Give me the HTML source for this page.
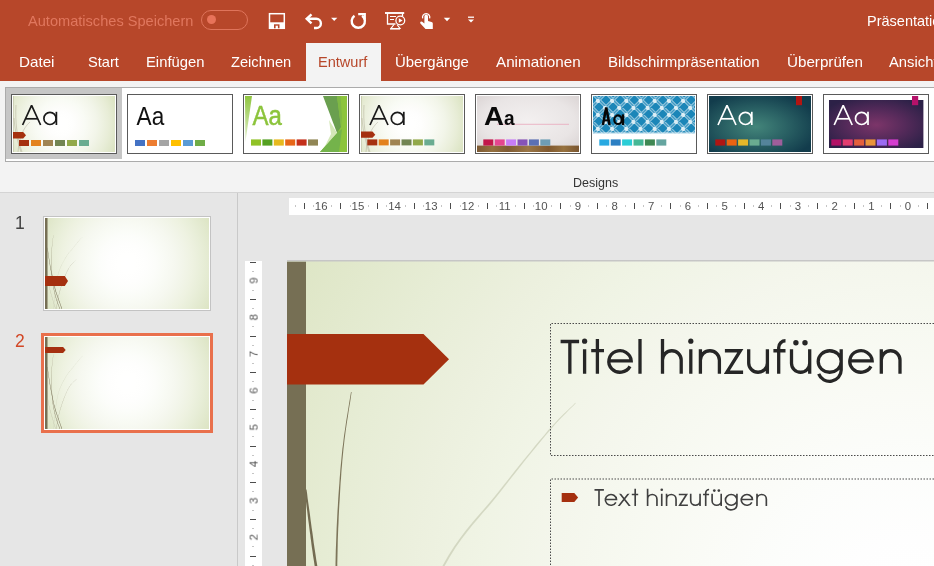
<!DOCTYPE html>
<html lang="de">
<head>
<meta charset="utf-8">
<title>PowerPoint</title>
<style>
*{margin:0;padding:0;box-sizing:border-box}
html,body{width:934px;height:566px;overflow:hidden;background:#e6e6e6;font-family:"Liberation Sans",sans-serif}
#app{position:relative;width:934px;height:566px;overflow:hidden;background:#e6e6e6}
.abs{position:absolute}
.t{position:absolute;white-space:nowrap;transform-origin:0 0;line-height:1;will-change:transform}
svg text{will-change:transform}
/* title + tab strip */
#top{left:0;top:0;width:934px;height:81px;background:#b7472a}
#tabactive{left:306px;top:43px;width:75px;height:38px;background:#f3f3f3}
.tab{font-size:14.5px;color:#fff;top:55px}
/* ribbon */
#ribbon{left:0;top:81px;width:934px;height:111px;background:#f3f3f3}
#ribline{left:0;top:192px;width:934px;height:1px;background:#d4d4d4}
#gallery{left:5px;top:87px;width:960px;height:75px;background:#fff;border:1px solid #ababab}
#sel{left:6px;top:88px;width:116px;height:71px;background:#c6c6c6}
.th{position:absolute;top:94px;width:106px;height:60px;border:1px solid #5a5a5a;background:#fff;overflow:hidden}
.th svg{position:absolute;left:1px;top:1px;width:102px;height:56px;display:block}
/* panels */
#vline{left:237px;top:193px;width:1px;height:373px;background:#c9c9c9}
#hruler{left:289px;top:198px;width:645px;height:17px;background:#fff}
#vruler{left:245px;top:261px;width:17px;height:305px;background:#fff}
</style>
</head>
<body>
<div id="app">

<!-- ===== title bar + tabs ===== -->
<div id="top" class="abs"></div>
<div id="tabactive" class="abs"></div>
<span class="t" id="autosave" style="left:28.400px;top:14px;font-size:14.5px;color:#e0775e;transform:scaleX(1.006)">Automatisches Speichern</span>
<div class="abs" id="toggle" style="left:201px;top:10px;width:47px;height:20px;border:1px solid #df745b;border-radius:10px"></div>
<div class="abs" id="knob" style="left:206.500px;top:15.300px;width:9px;height:9px;border-radius:4.500px;background:#e8735a"></div>
<span class="t" id="ptitle" style="left:867.300px;top:14px;font-size:14.5px;color:#fff">Präsentation1</span>
<svg class="abs" id="qat" style="left:260px;top:8px" width="230" height="26" viewBox="260 8 230 26" fill="none">
  <!-- save -->
  <rect x="269.5" y="13.700" width="14.800" height="14.600" stroke="#fff" stroke-width="1.5"/>
  <rect x="269.5" y="22.300" width="14.800" height="6" fill="#fff"/>
  <rect x="274" y="24.300" width="5.500" height="4" fill="#b7472a"/>
  <rect x="275.600" y="25.700" width="2.300" height="3.300" fill="#fff"/>
  <!-- undo -->
  <path d="M311.500 14.300l-4.800 4.500 4.800 4.500" stroke="#fff" stroke-width="2.400"/>
  <path d="M307 18.800h9.300a4.600 4.600 0 0 1 0 9.200h-2.300" stroke="#fff" stroke-width="2.400"/>
  <path d="M331.100 17.800h6.200l-3.100 3.300z" fill="#fff"/>
  <!-- redo (repeat) -->
  <path d="M354.500 15.800a6.600 6.600 0 1 0 7.600 0" stroke="#fff" stroke-width="2.400"/>
  <path d="M358.200 14.200h6.600v5.600" stroke="#fff" stroke-width="2.200"/>
  <!-- present -->
  <path d="M385 13h19.200" stroke="#fff" stroke-width="1.900"/>
  <path d="M387.5 13v11h8" stroke="#fff" stroke-width="1.3"/>
  <path d="M402.5 13v3" stroke="#fff" stroke-width="1.3"/>
  <path d="M390 16.5h6M390 19.5h4" stroke="#fff" stroke-width="1.2"/>
  <circle cx="400.3" cy="20.5" r="4.4" stroke="#fff" stroke-width="1.3"/>
  <path d="M398.8 18.2l3.8 2.3-3.8 2.3z" fill="#fff"/>
  <path d="M394 24.5l-3 4h9l-3-4" stroke="#fff" stroke-width="1.2"/>
  <path d="M390 29h10" stroke="#fff" stroke-width="1.2"/>
  <!-- touch -->
  <path d="M424.400 16.400a1.800 1.800 0 0 1 3.600 0v4.700l3.500.8a1.700 1.700 0 0 1 1.300 1.700v5.300h-7.300l-5.100-5.500a1.250 1.250 0 0 1 1.800-1.700l2.200 1.900z" fill="#fff"/>
  <path d="M422.700 18.400a3.650 3.650 0 1 1 6.900 0" stroke="#fff" stroke-width="1.300"/>
  <path d="M443.800 17.800h6.400l-3.200 3.400z" fill="#fff"/>
  <!-- customize -->
  <path d="M468 17.2h6" stroke="#fff" stroke-width="1.3"/>
  <path d="M468 19.6h6l-3 3z" fill="#fff"/>
</svg>
<span class="t tab" style="left:18.6px;transform:scaleX(1.048)">Datei</span>
<span class="t tab" style="left:88.4px;transform:scaleX(1.01)">Start</span>
<span class="t tab" style="left:145.7px;transform:scaleX(1.02)">Einfügen</span>
<span class="t tab" style="left:230.8px;transform:scaleX(1.01)">Zeichnen</span>
<span class="t tab" style="left:317.8px;color:#b7472a;transform:scaleX(1.004)">Entwurf</span>
<span class="t tab" style="left:394.7px;transform:scaleX(1.03)">Übergänge</span>
<span class="t tab" style="left:496.0px;transform:scaleX(1.05)">Animationen</span>
<span class="t tab" style="left:607.6px;transform:scaleX(1.034)">Bildschirmpräsentation</span>
<span class="t tab" style="left:786.6px;transform:scaleX(1.047)">Überprüfen</span>
<span class="t tab" style="left:889.1px;transform:scaleX(1.02)">Ansicht</span>

<!-- ===== ribbon ===== -->
<div id="ribbon" class="abs"></div>
<div id="ribline" class="abs"></div>
<div id="gallery" class="abs"></div>
<div id="sel" class="abs"></div>
<svg width="0" height="0" style="position:absolute"><defs><radialGradient id="wg" gradientUnits="userSpaceOnUse" cx="48" cy="28" r="60"><stop offset="0" stop-color="#ffffff"/><stop offset="0.1" stop-color="#fffffe"/><stop offset="0.2" stop-color="#fefefd"/><stop offset="0.3" stop-color="#fcfcf9"/><stop offset="0.4" stop-color="#f9fbf5"/><stop offset="0.5" stop-color="#f6f8ef"/><stop offset="0.6" stop-color="#f2f5e9"/><stop offset="0.7" stop-color="#edf1e0"/><stop offset="0.8" stop-color="#e8edd7"/><stop offset="0.9" stop-color="#e1e8cc"/><stop offset="1.0" stop-color="#dbe3c1"/></radialGradient></defs></svg>
<div class="th" style="left:11px"><svg viewBox="0 0 102 56"><rect width="102" height="56" fill="url(#wg)"/><g fill="none" stroke="#8d866f" stroke-opacity=".3" stroke-width="1"><path d="M3 9C2 25 4 42 9 56"/><path d="M1 22C2 36 5 47 8 56"/><path d="M17 26C10 32 6 42 5 56" stroke-opacity=".3"/></g><rect width="0.6" height="56" fill="#7a7359" fill-opacity=".35"/><path d="M0 36H10.2L13 39.3L10.2 42.6H0z" fill="#a5300f"/><rect x="6.00" y="44" width="10" height="6" fill="#a5300f"/><rect x="18.00" y="44" width="10" height="6" fill="#e3821e"/><rect x="30.00" y="44" width="10" height="6" fill="#a08452"/><rect x="42.00" y="44" width="10" height="6" fill="#728553"/><rect x="54.00" y="44" width="10" height="6" fill="#92a94a"/><rect x="66.00" y="44" width="10" height="6" fill="#6aac91"/><g fill="none" stroke="#1a1a1a" stroke-width="1.7" stroke-linejoin="miter" stroke-miterlimit="2"><path d="M9.6 29L18.6 9.399999999999999L27.6 29"/><path d="M12.6 22.8H24.6"/><circle cx="37.0" cy="22.4" r="6.1"/><path d="M43.4 15.8V29"/></g></svg></div>
<div class="th" style="left:127px"><svg viewBox="0 0 102 56"><rect width="102" height="56" fill="#fff"/><text x="7.6" y="29" font-family="Liberation Sans" font-size="25.4" fill="#111" textLength="27.6" lengthAdjust="spacingAndGlyphs">Aa</text><rect x="6.00" y="44" width="10" height="6" fill="#4472c4"/><rect x="18.00" y="44" width="10" height="6" fill="#ed7d31"/><rect x="30.00" y="44" width="10" height="6" fill="#a5a5a5"/><rect x="42.00" y="44" width="10" height="6" fill="#ffc000"/><rect x="54.00" y="44" width="10" height="6" fill="#5b9bd5"/><rect x="66.00" y="44" width="10" height="6" fill="#70ad47"/></svg></div>
<div class="th" style="left:243px"><svg viewBox="0 0 102 56"><rect width="102" height="56" fill="#fff"/><defs><linearGradient id="fg" x1="0" y1="0" x2="0" y2="1"><stop offset="0" stop-color="#8fc53f"/><stop offset="1" stop-color="#8fc53f" stop-opacity=".25"/></linearGradient></defs><path d="M0 0H7L0.4 46z" fill="url(#fg)"/><path d="M92 0H102V56H75L92 37z" fill="#8cc43c"/><path d="M78 0H92L96 31L92 37z" fill="#6a9f4f"/><path d="M92 0H95.5L97 22L96 31z" fill="#7fb845"/><path d="M84 24L92 37L79 52L86 38z" fill="#d4e8b8"/><path d="M92 37L97 33L94 56H75z" fill="#74b34b"/><text x="7.6" y="29" font-family="Liberation Sans" font-size="27" fill="#8cc43c" stroke="#8cc43c" stroke-width=".5" textLength="29.4" lengthAdjust="spacingAndGlyphs">Aa</text><rect x="6.00" y="43.4" width="10" height="6.2" fill="#90c226"/><rect x="17.40" y="43.4" width="10" height="6.2" fill="#54a021"/><rect x="28.80" y="43.4" width="10" height="6.2" fill="#e6b91e"/><rect x="40.20" y="43.4" width="10" height="6.2" fill="#e76618"/><rect x="51.60" y="43.4" width="10" height="6.2" fill="#c42f1a"/><rect x="63.00" y="43.4" width="10" height="6.2" fill="#918655"/></svg></div>
<div class="th" style="left:359px"><svg viewBox="0 0 102 56"><rect width="102" height="56" fill="url(#wg)"/><g fill="none" stroke="#8d866f" stroke-opacity=".3" stroke-width="1"><path d="M3 9C2 25 4 42 9 56"/><path d="M1 22C2 36 5 47 8 56"/><path d="M17 26C10 32 6 42 5 56" stroke-opacity=".3"/></g><rect width="0.6" height="56" fill="#7a7359" fill-opacity=".35"/><path d="M0 35.6H11.5L14.3 38.650000000000006L11.5 41.7H0z" fill="#a5300f"/><rect x="6.30" y="43.4" width="10" height="6" fill="#a5300f"/><rect x="17.70" y="43.4" width="10" height="6" fill="#e3821e"/><rect x="29.10" y="43.4" width="10" height="6" fill="#a08452"/><rect x="40.50" y="43.4" width="10" height="6" fill="#728553"/><rect x="51.90" y="43.4" width="10" height="6" fill="#92a94a"/><rect x="63.30" y="43.4" width="10" height="6" fill="#6aac91"/><g fill="none" stroke="#1a1a1a" stroke-width="1.7" stroke-linejoin="miter" stroke-miterlimit="2"><path d="M9.0 29L18.0 9.399999999999999L27.0 29"/><path d="M12.0 22.8H24.0"/><circle cx="36.4" cy="22.4" r="6.1"/><path d="M42.8 15.8V29"/></g></svg></div>
<div class="th" style="left:475px"><svg viewBox="0 0 102 56"><defs><radialGradient id="gg" cx="0.5" cy="0.45" r="0.75"><stop offset="0" stop-color="#f3f0f0"/><stop offset="0.6" stop-color="#e9e5e5"/><stop offset="1" stop-color="#d6cfcf"/></radialGradient><linearGradient id="wd" x1="0" y1="0" x2="1" y2="0"><stop offset="0" stop-color="#7d5a33"/><stop offset=".15" stop-color="#94703f"/><stop offset=".3" stop-color="#7f5b34"/><stop offset=".5" stop-color="#9a7646"/><stop offset=".7" stop-color="#80592f"/><stop offset=".85" stop-color="#97723f"/><stop offset="1" stop-color="#7a5630"/></linearGradient></defs><rect width="102" height="56" fill="url(#gg)"/><rect y="49.6" width="102" height="6.4" fill="url(#wd)"/><path d="M20 28.3H92" stroke="#e9a7bb" stroke-width=".8"/><text x="7" y="29" font-family="Liberation Sans" font-weight="bold" font-size="26" fill="#0a0a0a" textLength="20" lengthAdjust="spacingAndGlyphs">A</text><text x="27" y="29" font-family="Liberation Sans" font-weight="bold" font-size="21" fill="#0a0a0a" textLength="10.6" lengthAdjust="spacingAndGlyphs">a</text><rect x="6.30" y="43.4" width="10" height="6.2" fill="#c2174a"/><rect x="17.70" y="43.4" width="10" height="6.2" fill="#e5458f"/><rect x="29.10" y="43.4" width="10" height="6.2" fill="#c77cf7"/><rect x="40.50" y="43.4" width="10" height="6.2" fill="#8653b7"/><rect x="51.90" y="43.4" width="10" height="6.2" fill="#5b70b4"/><rect x="63.30" y="43.4" width="10" height="6.2" fill="#6e9db5"/></svg></div>
<div class="th" style="left:591px"><svg viewBox="0 0 102 56"><rect width="102" height="56" fill="#fff"/><clipPath id="c6"><rect width="102" height="37.4"/></clipPath><rect width="102" height="37.4" fill="#1b86b8"/><g clip-path="url(#c6)"><path d="M-127.80 -2L-85.80 40M-116.00 -2L-158.00 40M-113.60 -2L-71.60 40M-101.80 -2L-143.80 40M-99.40 -2L-57.40 40M-87.60 -2L-129.60 40M-85.20 -2L-43.20 40M-73.40 -2L-115.40 40M-71.00 -2L-29.00 40M-59.20 -2L-101.20 40M-56.80 -2L-14.80 40M-45.00 -2L-87.00 40M-42.60 -2L-0.60 40M-30.80 -2L-72.80 40M-28.40 -2L13.60 40M-16.60 -2L-58.60 40M-14.20 -2L27.80 40M-2.40 -2L-44.40 40M0.00 -2L42.00 40M11.80 -2L-30.20 40M14.20 -2L56.20 40M26.00 -2L-16.00 40M28.40 -2L70.40 40M40.20 -2L-1.80 40M42.60 -2L84.60 40M54.40 -2L12.40 40M56.80 -2L98.80 40M68.60 -2L26.60 40M71.00 -2L113.00 40M82.80 -2L40.80 40M85.20 -2L127.20 40M97.00 -2L55.00 40M99.40 -2L141.40 40M111.20 -2L69.20 40M113.60 -2L155.60 40M125.40 -2L83.40 40M127.80 -2L169.80 40M139.60 -2L97.60 40M142.00 -2L184.00 40M153.80 -2L111.80 40" fill="none" stroke="#dceef6" stroke-opacity=".62" stroke-width="3.3"/><path d="M-127.80 -2L-85.80 40M-116.00 -2L-158.00 40M-113.60 -2L-71.60 40M-101.80 -2L-143.80 40M-99.40 -2L-57.40 40M-87.60 -2L-129.60 40M-85.20 -2L-43.20 40M-73.40 -2L-115.40 40M-71.00 -2L-29.00 40M-59.20 -2L-101.20 40M-56.80 -2L-14.80 40M-45.00 -2L-87.00 40M-42.60 -2L-0.60 40M-30.80 -2L-72.80 40M-28.40 -2L13.60 40M-16.60 -2L-58.60 40M-14.20 -2L27.80 40M-2.40 -2L-44.40 40M0.00 -2L42.00 40M11.80 -2L-30.20 40M14.20 -2L56.20 40M26.00 -2L-16.00 40M28.40 -2L70.40 40M40.20 -2L-1.80 40M42.60 -2L84.60 40M54.40 -2L12.40 40M56.80 -2L98.80 40M68.60 -2L26.60 40M71.00 -2L113.00 40M82.80 -2L40.80 40M85.20 -2L127.20 40M97.00 -2L55.00 40M99.40 -2L141.40 40M111.20 -2L69.20 40M113.60 -2L155.60 40M125.40 -2L83.40 40M127.80 -2L169.80 40M139.60 -2L97.60 40M142.00 -2L184.00 40M153.80 -2L111.80 40" fill="none" stroke="#1b86b8" stroke-opacity=".7" stroke-width="1.2"/><g fill="#f2f9fc" fill-opacity=".85"><circle cx="-9.30" cy="-9.10" r="2.100"/><circle cx="-16.40" cy="-2.10" r="2.100"/><circle cx="4.90" cy="-9.10" r="2.100"/><circle cx="-2.20" cy="-2.10" r="2.100"/><circle cx="19.10" cy="-9.10" r="2.100"/><circle cx="12.00" cy="-2.10" r="2.100"/><circle cx="33.30" cy="-9.10" r="2.100"/><circle cx="26.20" cy="-2.10" r="2.100"/><circle cx="47.50" cy="-9.10" r="2.100"/><circle cx="40.40" cy="-2.10" r="2.100"/><circle cx="61.70" cy="-9.10" r="2.100"/><circle cx="54.60" cy="-2.10" r="2.100"/><circle cx="75.90" cy="-9.10" r="2.100"/><circle cx="68.80" cy="-2.10" r="2.100"/><circle cx="90.10" cy="-9.10" r="2.100"/><circle cx="83.00" cy="-2.10" r="2.100"/><circle cx="104.30" cy="-9.10" r="2.100"/><circle cx="97.20" cy="-2.10" r="2.100"/><circle cx="118.50" cy="-9.10" r="2.100"/><circle cx="111.40" cy="-2.10" r="2.100"/><circle cx="-9.30" cy="4.90" r="2.100"/><circle cx="-16.40" cy="11.90" r="2.100"/><circle cx="4.90" cy="4.90" r="2.100"/><circle cx="-2.20" cy="11.90" r="2.100"/><circle cx="19.10" cy="4.90" r="2.100"/><circle cx="12.00" cy="11.90" r="2.100"/><circle cx="33.30" cy="4.90" r="2.100"/><circle cx="26.20" cy="11.90" r="2.100"/><circle cx="47.50" cy="4.90" r="2.100"/><circle cx="40.40" cy="11.90" r="2.100"/><circle cx="61.70" cy="4.90" r="2.100"/><circle cx="54.60" cy="11.90" r="2.100"/><circle cx="75.90" cy="4.90" r="2.100"/><circle cx="68.80" cy="11.90" r="2.100"/><circle cx="90.10" cy="4.90" r="2.100"/><circle cx="83.00" cy="11.90" r="2.100"/><circle cx="104.30" cy="4.90" r="2.100"/><circle cx="97.20" cy="11.90" r="2.100"/><circle cx="118.50" cy="4.90" r="2.100"/><circle cx="111.40" cy="11.90" r="2.100"/><circle cx="-9.30" cy="18.90" r="2.100"/><circle cx="-16.40" cy="25.90" r="2.100"/><circle cx="4.90" cy="18.90" r="2.100"/><circle cx="-2.20" cy="25.90" r="2.100"/><circle cx="19.10" cy="18.90" r="2.100"/><circle cx="12.00" cy="25.90" r="2.100"/><circle cx="33.30" cy="18.90" r="2.100"/><circle cx="26.20" cy="25.90" r="2.100"/><circle cx="47.50" cy="18.90" r="2.100"/><circle cx="40.40" cy="25.90" r="2.100"/><circle cx="61.70" cy="18.90" r="2.100"/><circle cx="54.60" cy="25.90" r="2.100"/><circle cx="75.90" cy="18.90" r="2.100"/><circle cx="68.80" cy="25.90" r="2.100"/><circle cx="90.10" cy="18.90" r="2.100"/><circle cx="83.00" cy="25.90" r="2.100"/><circle cx="104.30" cy="18.90" r="2.100"/><circle cx="97.20" cy="25.90" r="2.100"/><circle cx="118.50" cy="18.90" r="2.100"/><circle cx="111.40" cy="25.90" r="2.100"/><circle cx="-9.30" cy="32.90" r="2.100"/><circle cx="-16.40" cy="39.90" r="2.100"/><circle cx="4.90" cy="32.90" r="2.100"/><circle cx="-2.20" cy="39.90" r="2.100"/><circle cx="19.10" cy="32.90" r="2.100"/><circle cx="12.00" cy="39.90" r="2.100"/><circle cx="33.30" cy="32.90" r="2.100"/><circle cx="26.20" cy="39.90" r="2.100"/><circle cx="47.50" cy="32.90" r="2.100"/><circle cx="40.40" cy="39.90" r="2.100"/><circle cx="61.70" cy="32.90" r="2.100"/><circle cx="54.60" cy="39.90" r="2.100"/><circle cx="75.90" cy="32.90" r="2.100"/><circle cx="68.80" cy="39.90" r="2.100"/><circle cx="90.10" cy="32.90" r="2.100"/><circle cx="83.00" cy="39.90" r="2.100"/><circle cx="104.30" cy="32.90" r="2.100"/><circle cx="97.20" cy="39.90" r="2.100"/><circle cx="118.50" cy="32.90" r="2.100"/><circle cx="111.40" cy="39.90" r="2.100"/><circle cx="-9.30" cy="46.90" r="2.100"/><circle cx="-16.40" cy="53.90" r="2.100"/><circle cx="4.90" cy="46.90" r="2.100"/><circle cx="-2.20" cy="53.90" r="2.100"/><circle cx="19.10" cy="46.90" r="2.100"/><circle cx="12.00" cy="53.90" r="2.100"/><circle cx="33.30" cy="46.90" r="2.100"/><circle cx="26.20" cy="53.90" r="2.100"/><circle cx="47.50" cy="46.90" r="2.100"/><circle cx="40.40" cy="53.90" r="2.100"/><circle cx="61.70" cy="46.90" r="2.100"/><circle cx="54.60" cy="53.90" r="2.100"/><circle cx="75.90" cy="46.90" r="2.100"/><circle cx="68.80" cy="53.90" r="2.100"/><circle cx="90.10" cy="46.90" r="2.100"/><circle cx="83.00" cy="53.90" r="2.100"/><circle cx="104.30" cy="46.90" r="2.100"/><circle cx="97.20" cy="53.90" r="2.100"/><circle cx="118.50" cy="46.90" r="2.100"/><circle cx="111.40" cy="53.90" r="2.100"/><circle cx="-9.30" cy="60.90" r="2.100"/><circle cx="-16.40" cy="67.90" r="2.100"/><circle cx="4.90" cy="60.90" r="2.100"/><circle cx="-2.20" cy="67.90" r="2.100"/><circle cx="19.10" cy="60.90" r="2.100"/><circle cx="12.00" cy="67.90" r="2.100"/><circle cx="33.30" cy="60.90" r="2.100"/><circle cx="26.20" cy="67.90" r="2.100"/><circle cx="47.50" cy="60.90" r="2.100"/><circle cx="40.40" cy="67.90" r="2.100"/><circle cx="61.70" cy="60.90" r="2.100"/><circle cx="54.60" cy="67.90" r="2.100"/><circle cx="75.90" cy="60.90" r="2.100"/><circle cx="68.80" cy="67.90" r="2.100"/><circle cx="90.10" cy="60.90" r="2.100"/><circle cx="83.00" cy="67.90" r="2.100"/><circle cx="104.30" cy="60.90" r="2.100"/><circle cx="97.20" cy="67.90" r="2.100"/><circle cx="118.50" cy="60.90" r="2.100"/><circle cx="111.40" cy="67.90" r="2.100"/></g></g><rect y="36.2" width="102" height="1.8" fill="#fff" fill-opacity=".5"/><rect x="6.30" y="43.4" width="10" height="6.2" fill="#27a9e1"/><rect x="17.70" y="43.4" width="10" height="6.2" fill="#2b7fc3"/><rect x="29.10" y="43.4" width="10" height="6.2" fill="#2bcdd6"/><rect x="40.50" y="43.4" width="10" height="6.2" fill="#45b896"/><rect x="51.90" y="43.4" width="10" height="6.2" fill="#3f8853"/><rect x="63.30" y="43.4" width="10" height="6.2" fill="#65a5a0"/><g fill="none" stroke="#050505" stroke-width="2.5"><path d="M9.9 29L13.2 11.6L16.6 29" stroke-linejoin="bevel"/><path d="M11 24.4H15.5" stroke-width="2"/><ellipse cx="25" cy="23.7" rx="3.7" ry="4.3" stroke-width="2.2"/><path d="M30 18.4V29" stroke-width="2.4"/></g></svg></div>
<div class="th" style="left:707px"><svg viewBox="0 0 102 56"><defs><radialGradient id="ig" cx="0.46" cy="0.55" r="0.62"><stop offset="0" stop-color="#43857a"/><stop offset="0.5" stop-color="#2a6164"/><stop offset="1" stop-color="#123c4c"/></radialGradient></defs><rect width="102" height="56" fill="url(#ig)"/><rect x="87" width="6" height="9.2" fill="#b31512"/><rect x="6.30" y="43.4" width="10" height="6.2" fill="#b01513"/><rect x="17.70" y="43.4" width="10" height="6.2" fill="#ea6312"/><rect x="29.10" y="43.4" width="10" height="6.2" fill="#e6b729"/><rect x="40.50" y="43.4" width="10" height="6.2" fill="#6aac90"/><rect x="51.90" y="43.4" width="10" height="6.2" fill="#54849a"/><rect x="63.30" y="43.4" width="10" height="6.2" fill="#9e5e9b"/><g fill="none" stroke="#fff" stroke-width="1.7" stroke-linejoin="miter" stroke-miterlimit="2"><path d="M9.0 29L18.0 9.399999999999999L27.0 29"/><path d="M12.0 22.8H24.0"/><circle cx="36.4" cy="22.4" r="6.1"/><path d="M42.8 15.8V29"/></g></svg></div>
<div class="th" style="left:823px"><svg viewBox="0 0 102 56"><defs><radialGradient id="bg8" cx="0.5" cy="0.52" r="0.62"><stop offset="0" stop-color="#7c3569"/><stop offset="0.5" stop-color="#552a5a"/><stop offset="1" stop-color="#2c2147"/></radialGradient></defs><rect width="102" height="56" fill="#fff"/><rect x="4" y="4" width="94.4" height="48" fill="url(#bg8)"/><rect x="87" width="6.2" height="9.2" fill="#b5126a"/><rect x="6.30" y="43.4" width="10" height="6.2" fill="#b31166"/><rect x="17.70" y="43.4" width="10" height="6.2" fill="#e33d6f"/><rect x="29.10" y="43.4" width="10" height="6.2" fill="#e45f3c"/><rect x="40.50" y="43.4" width="10" height="6.2" fill="#e9943a"/><rect x="51.90" y="43.4" width="10" height="6.2" fill="#9b6bf2"/><rect x="63.30" y="43.4" width="10" height="6.2" fill="#d53dd0"/><g fill="none" stroke="#fff" stroke-width="1.7" stroke-linejoin="miter" stroke-miterlimit="2"><path d="M9.2 29L18.2 9.399999999999999L27.200000000000003 29"/><path d="M12.2 22.8H24.2"/><circle cx="36.6" cy="22.4" r="6.1"/><path d="M43.0 15.8V29"/></g></svg></div>
<span class="t" id="designs" style="left:573px;top:177px;font-size:12.5px;color:#333">Designs</span>

<!-- ===== workspace ===== -->
<div id="vline" class="abs"></div>
<div id="hruler" class="abs"></div>
<div id="vruler" class="abs"></div>
<svg width="0" height="0" style="position:absolute"><defs>
<radialGradient id="sbg" gradientUnits="userSpaceOnUse" cx="621" cy="349.25" r="712"><stop offset="0" stop-color="#ffffff"/><stop offset="0.1" stop-color="#fefefe"/><stop offset="0.2" stop-color="#fcfdfb"/><stop offset="0.3" stop-color="#fafbf6"/><stop offset="0.4" stop-color="#f7f9f1"/><stop offset="0.5" stop-color="#f4f6ec"/><stop offset="0.6" stop-color="#f0f4e5"/><stop offset="0.7" stop-color="#ecf0de"/><stop offset="0.8" stop-color="#e7edd6"/><stop offset="0.9" stop-color="#e2e9cd"/><stop offset="1.0" stop-color="#dde5c4"/></radialGradient>
<radialGradient id="tbg" gradientUnits="userSpaceOnUse" cx="82" cy="45.5" r="93.8"><stop offset="0" stop-color="#ffffff"/><stop offset="0.1" stop-color="#fffffe"/><stop offset="0.2" stop-color="#fefefd"/><stop offset="0.3" stop-color="#fcfdfa"/><stop offset="0.4" stop-color="#f9fbf5"/><stop offset="0.5" stop-color="#f6f8f0"/><stop offset="0.6" stop-color="#f2f5e9"/><stop offset="0.7" stop-color="#eef2e1"/><stop offset="0.8" stop-color="#e8eed8"/><stop offset="0.9" stop-color="#e2e9ce"/><stop offset="1.0" stop-color="#dce4c3"/></radialGradient>
<symbol id="wispart" viewBox="0 0 1242 698.5" preserveAspectRatio="none">
<g><path d="M288.3 141.3L285.7 143.9L283.2 146.3L280.9 148.5L278.5 150.8L276.1 153.1L273.6 155.5L270.9 158.2L268.0 161.4L264.7 164.9L261.0 169.1L257.0 173.9L252.6 179.1L247.8 184.8L242.9 190.9L237.7 197.2L232.4 203.8L227.0 210.6L221.6 217.4L216.2 224.2L210.9 231.0L205.6 237.5L200.3 243.8L194.9 250.0L189.4 256.2L183.9 262.7L178.4 269.6L172.8 277.0L167.1 285.1L161.4 294.1L155.7 304.0L149.8 314.6L143.6 325.5L137.3 336.8L130.9 348.7L124.6 361.4L118.3 375.0L112.2 389.6L106.4 405.5L100.9 422.9L95.9 441.7L91.4 462.6L87.3 485.4L83.6 509.9L80.1 535.7L76.8 562.5L73.7 589.8L70.6 617.3L67.4 644.8L64.2 671.7L60.8 697.8L63.2 698.2L66.6 672.0L69.8 645.0L72.9 617.6L76.0 590.0L79.1 562.7L82.4 536.0L85.8 510.3L89.5 485.8L93.6 463.0L98.1 442.3L103.0 423.5L108.4 406.2L114.2 390.4L120.2 375.8L126.4 362.3L132.7 349.6L139.1 337.8L145.4 326.5L151.5 315.6L157.3 305.0L163.0 295.0L168.6 286.1L174.2 278.0L179.8 270.7L185.3 263.8L190.7 257.4L196.1 251.1L201.5 244.9L206.9 238.6L212.1 232.0L217.4 225.2L222.8 218.3L228.2 211.5L233.5 204.7L238.8 198.1L243.9 191.8L248.9 185.7L253.6 180.0L257.9 174.7L262.0 169.9L265.6 165.7L268.8 162.1L271.7 159.0L274.3 156.2L276.8 153.7L279.1 151.4L281.4 149.1L283.7 146.8L286.1 144.4L288.7 141.7z" fill="#c7ccb4" fill-opacity=".7"/><path d="M237.7 319.7L232.9 324.6L228.0 329.2L223.0 333.7L218.1 338.2L213.1 342.7L208.2 347.4L203.4 352.4L198.6 357.7L193.9 363.4L189.4 369.6L185.1 376.2L180.8 383.1L176.7 390.2L172.7 397.6L168.8 405.3L164.9 413.3L161.0 421.8L157.1 430.6L153.2 439.9L149.2 449.7L145.1 460.0L140.9 471.0L136.6 482.5L132.4 494.4L128.1 506.7L123.9 519.2L119.9 531.8L116.0 544.5L112.3 557.2L108.9 569.7L105.8 582.2L102.9 594.8L100.3 607.6L97.8 620.4L95.4 633.3L93.1 646.2L90.9 659.1L88.6 672.1L86.3 684.9L83.8 697.8L86.2 698.2L88.6 685.4L90.9 672.5L93.2 659.6L95.4 646.6L97.7 633.7L100.0 620.8L102.5 608.0L105.1 595.3L108.0 582.7L111.1 570.3L114.4 557.8L118.1 545.2L121.9 532.5L125.9 519.8L130.0 507.3L134.2 495.1L138.4 483.1L142.6 471.6L146.8 460.7L150.8 450.3L154.8 440.6L158.7 431.3L162.5 422.5L166.4 414.0L170.2 406.0L174.1 398.3L178.1 390.9L182.1 383.8L186.3 377.0L190.6 370.4L195.0 364.2L199.6 358.5L204.3 353.2L209.0 348.3L213.9 343.5L218.8 338.9L223.7 334.4L228.6 329.9L233.5 325.2L238.3 320.3z" fill="#8f886f" fill-opacity=".65"/><path d="M11.3 380.1L12.9 393.9L14.3 407.5L15.6 420.9L16.8 434.3L18.1 447.7L19.6 461.4L21.3 475.3L23.4 489.7L25.9 504.6L29.0 520.2L32.7 536.5L36.9 553.4L41.6 570.9L46.7 588.8L51.9 606.9L57.4 625.3L62.9 643.7L68.4 662.1L73.7 680.4L78.8 698.3L81.2 697.7L76.0 679.7L70.6 661.5L65.1 643.1L59.5 624.7L54.1 606.3L48.7 588.2L43.7 570.3L39.0 552.9L34.7 536.0L31.0 519.8L27.9 504.3L25.3 489.4L23.2 475.1L21.4 461.2L19.9 447.5L18.5 434.1L17.2 420.7L15.9 407.3L14.4 393.7L12.7 379.9z" fill="#a39d88" fill-opacity=".6"/><path d="M64.0 130.4L63.2 135.3L62.4 140.1L61.6 145.0L60.8 149.9L60.0 154.7L59.2 159.6L58.5 164.4L57.8 169.2L57.1 173.8L56.5 178.4L56.0 182.9L55.4 187.1L55.0 191.3L54.6 195.3L54.2 199.4L53.8 203.5L53.4 207.7L53.1 212.0L52.7 216.6L52.4 221.5L52.0 226.6L51.6 232.0L51.2 237.7L50.9 243.5L50.5 249.4L50.2 255.4L49.9 261.3L49.6 267.2L49.4 272.9L49.2 278.5L49.0 283.7L48.8 288.5L48.7 293.1L48.6 297.6L48.5 302.2L48.5 306.9L48.4 311.9L48.4 317.3L48.5 323.3L48.6 330.0L48.6 337.4L48.7 345.4L48.8 353.9L48.9 362.8L49.0 372.0L49.2 381.5L49.5 391.1L49.9 400.8L50.3 410.5L50.9 420.1L51.5 429.7L52.1 439.4L52.8 449.4L53.6 459.4L54.5 469.5L55.5 479.6L56.6 489.8L57.8 500.0L59.2 510.1L60.7 520.2L62.5 530.3L64.4 540.6L66.5 551.0L68.7 561.4L71.0 571.7L73.4 581.9L75.9 592.0L78.5 601.8L81.0 611.3L83.6 620.4L86.2 629.1L88.8 637.5L91.6 645.5L94.4 653.3L97.2 660.9L100.1 668.4L103.0 675.9L105.8 683.3L108.7 690.9L111.5 698.6L114.5 697.4L111.7 689.7L108.8 682.2L105.9 674.7L103.0 667.3L100.1 659.8L97.3 652.2L94.5 644.5L91.7 636.5L89.0 628.2L86.4 619.6L83.9 610.5L81.3 601.0L78.7 591.3L76.2 581.2L73.7 571.1L71.4 560.8L69.1 550.4L67.0 540.1L65.0 529.9L63.3 519.8L61.7 509.8L60.3 499.7L59.1 489.5L57.9 479.4L56.9 469.3L56.0 459.2L55.2 449.2L54.5 439.3L53.8 429.5L53.1 419.9L52.6 410.4L52.1 400.7L51.7 391.0L51.4 381.4L51.1 371.9L50.9 362.7L50.8 353.8L50.7 345.4L50.6 337.4L50.4 330.0L50.4 323.3L50.3 317.3L50.3 311.9L50.3 306.9L50.3 302.2L50.4 297.7L50.5 293.2L50.6 288.6L50.7 283.7L50.8 278.5L51.0 273.0L51.2 267.3L51.5 261.4L51.7 255.5L52.0 249.5L52.3 243.6L52.7 237.8L53.0 232.1L53.3 226.7L53.6 221.5L54.0 216.7L54.3 212.1L54.6 207.8L55.0 203.6L55.3 199.5L55.7 195.4L56.1 191.4L56.5 187.3L57.0 183.0L57.5 178.6L58.1 174.0L58.7 169.3L59.4 164.5L60.1 159.7L60.9 154.9L61.6 150.0L62.4 145.1L63.2 140.2L63.9 135.4L64.6 130.6z" fill="#7d755a"/><path d="M17.5 228.1L18.0 232.4L18.6 236.7L19.1 241.0L19.6 245.3L20.2 249.6L20.7 253.9L21.2 258.1L21.8 262.2L22.3 266.3L22.8 270.2L23.3 273.6L23.6 276.6L24.0 279.1L24.3 281.6L24.6 284.1L25.0 286.8L25.5 290.1L26.0 294.0L26.8 298.8L27.7 304.7L28.8 311.6L30.0 319.2L31.2 327.5L32.6 336.4L34.1 345.9L35.7 355.9L37.4 366.4L39.3 377.3L41.3 388.6L43.5 400.3L45.8 412.4L48.2 425.1L50.7 438.5L53.3 452.2L56.1 466.4L59.1 480.9L62.3 495.6L65.7 510.5L69.4 525.5L73.4 540.5L77.7 555.6L82.5 571.0L87.6 586.6L92.9 602.5L98.4 618.5L104.0 634.5L109.7 650.6L115.4 666.7L120.9 682.7L126.3 698.6L129.7 697.4L124.3 681.5L118.7 665.5L113.0 649.4L107.4 633.4L101.7 617.3L96.2 601.3L90.9 585.5L85.8 569.9L81.0 554.6L76.6 539.5L72.6 524.7L68.9 509.7L65.5 494.9L62.3 480.2L59.3 465.8L56.4 451.6L53.8 437.9L51.3 424.6L48.8 411.8L46.5 399.7L44.2 388.1L42.2 376.8L40.2 365.9L38.5 355.4L36.8 345.4L35.3 336.0L33.9 327.1L32.6 318.8L31.4 311.2L30.3 304.3L29.3 298.4L28.6 293.6L28.0 289.7L27.5 286.5L27.1 283.7L26.7 281.2L26.4 278.8L26.1 276.2L25.7 273.3L25.2 269.8L24.6 265.9L24.1 261.9L23.5 257.8L23.0 253.6L22.4 249.3L21.8 245.0L21.2 240.7L20.6 236.4L20.1 232.1L19.5 227.9z" fill="#736b51"/></g>
<rect width="19" height="698.5" fill="#766f54"/>
</symbol></defs></svg>
<svg class="abs" style="left:0;top:0" width="934" height="566" viewBox="0 0 934 566" font-family="Liberation Sans" font-size="11.4" fill="#545454"><text x="907.9" y="210.400" text-anchor="middle">0</text><text x="871.3" y="210.400" text-anchor="middle">1</text><text x="834.6" y="210.400" text-anchor="middle">2</text><text x="797.9" y="210.400" text-anchor="middle">3</text><text x="761.2" y="210.400" text-anchor="middle">4</text><text x="724.6" y="210.400" text-anchor="middle">5</text><text x="687.9" y="210.400" text-anchor="middle">6</text><text x="651.2" y="210.400" text-anchor="middle">7</text><text x="614.6" y="210.400" text-anchor="middle">8</text><text x="577.9" y="210.400" text-anchor="middle">9</text><text x="541.2" y="210.400" text-anchor="middle">10</text><text x="504.6" y="210.400" text-anchor="middle">11</text><text x="467.9" y="210.400" text-anchor="middle">12</text><text x="431.2" y="210.400" text-anchor="middle">13</text><text x="394.5" y="210.400" text-anchor="middle">14</text><text x="357.9" y="210.400" text-anchor="middle">15</text><text x="321.2" y="210.400" text-anchor="middle">16</text><text transform="translate(257.600 573.9) rotate(-90)" text-anchor="middle">1</text><text transform="translate(257.600 537.2) rotate(-90)" text-anchor="middle">2</text><text transform="translate(257.600 500.6) rotate(-90)" text-anchor="middle">3</text><text transform="translate(257.600 463.9) rotate(-90)" text-anchor="middle">4</text><text transform="translate(257.600 427.2) rotate(-90)" text-anchor="middle">5</text><text transform="translate(257.600 390.5) rotate(-90)" text-anchor="middle">6</text><text transform="translate(257.600 353.9) rotate(-90)" text-anchor="middle">7</text><text transform="translate(257.600 317.2) rotate(-90)" text-anchor="middle">8</text><text transform="translate(257.600 280.5) rotate(-90)" text-anchor="middle">9</text><path d="M927.500 203V209M890.5 203V209M854.5 203V209M817.5 203V209M780.5 203V209M744.5 203V209M707.5 203V209M670.5 203V209M634.5 203V209M597.5 203V209M560.5 203V209M524.5 203V209M487.5 203V209M450.5 203V209M414.5 203V209M377.5 203V209M340.5 203V209M304.5 203V209M250 556.5H256M250 519.5H256M250 482.5H256M250 446.5H256M250 409.5H256M250 372.5H256M250 336.5H256M250 299.5H256M250 262.5H256" stroke="#4d4d4d" stroke-width="1"/><path d="M900.5 205.500V206.500M881.5 205.500V206.500M863.5 205.500V206.500M845.5 205.500V206.500M826.5 205.500V206.500M808.5 205.500V206.500M790.5 205.500V206.500M771.5 205.500V206.500M753.5 205.500V206.500M735.5 205.500V206.500M716.5 205.500V206.500M698.5 205.500V206.500M680.5 205.500V206.500M661.5 205.500V206.500M643.5 205.500V206.500M625.5 205.500V206.500M606.5 205.500V206.500M588.5 205.500V206.500M570.5 205.500V206.500M551.5 205.500V206.500M533.5 205.500V206.500M515.5 205.500V206.500M496.5 205.500V206.500M478.5 205.500V206.500M460.5 205.500V206.500M441.5 205.500V206.500M423.5 205.500V206.500M405.5 205.500V206.500M386.5 205.500V206.500M368.5 205.500V206.500M350.5 205.500V206.500M331.5 205.500V206.500M313.5 205.500V206.500M295.5 205.500V206.500M918.5 205.500V206.500M252.500 565.5H253.500M252.500 546.5H253.500M252.500 528.5H253.500M252.500 510.5H253.500M252.500 491.5H253.500M252.500 473.5H253.500M252.500 455.5H253.500M252.500 436.5H253.500M252.500 418.5H253.500M252.500 400.5H253.500M252.500 381.5H253.500M252.500 363.5H253.500M252.500 345.5H253.500M252.500 326.5H253.500M252.500 308.5H253.500M252.500 290.5H253.500M252.500 271.5H253.500" stroke="#8a8a8a" stroke-width="1"/></svg>
<span class="t" style="left:14.5px;top:214.500px;font-size:17.5px;color:#444">1</span>
<span class="t" style="left:14.5px;top:333px;font-size:17.5px;color:#d24726">2</span>
<div class="abs" style="left:43px;top:216px;width:168px;height:95px;border:1px solid #c3c3c3;background:#fff"></div>
<svg class="abs" style="left:45px;top:218px" width="164" height="91" viewBox="0 0 164 91"><rect width="164" height="91" fill="url(#tbg)"/><use href="#wispart" width="164" height="91"/><path d="M0 58H19.8L23 63.0L19.8 68H0z" fill="#a5300f"/></svg>
<div class="abs" style="left:41px;top:333px;width:172px;height:100px;border:3px solid #e9704c;background:#fff"></div>
<svg class="abs" style="left:45px;top:337px" width="164" height="92" viewBox="0 0 164 92"><rect width="164" height="92" fill="url(#tbg)"/><use href="#wispart" width="164" height="92"/><path d="M0 10H18.099999999999998L20.7 13.0L18.099999999999998 16H0z" fill="#a5300f"/></svg>
<div class="abs" style="left:287px;top:260px;width:647px;height:306px;background:#c6c6c6"></div>
<svg class="abs" style="left:287px;top:261px" width="647" height="305" viewBox="0 0 647 305"><rect x="0" y="0.5" width="1242" height="698.5" fill="url(#sbg)"/><use href="#wispart" x="0" y="0.5" width="1242" height="698.5"/><path d="M0 73H136.5L162 98.2L136.5 123.4H0z" fill="#a5300f"/>
<path d="M647 62.500H263.500V194.500H647M647 218H263.500V305" fill="none" stroke="#4a4a4a" stroke-width="1" stroke-dasharray="1.5 1.5"/>
<path d="M274.700 232H287.300L291.100 236.500L287.300 241H274.700z" fill="#a5300f"/>
</svg>
<svg class="abs" id="cgtext" style="left:0;top:0" width="934" height="566" viewBox="0 0 934 566"><defs><clipPath id="xclip"><rect x="600.5" y="349.2" width="32" height="24.5"/></clipPath><g id="hinz"><path d="M662.50 339.10V373.70M662.50 360.10A9.35 9.35 0 0 1 681.20 360.10V373.70M690.80 349.20V373.70M700.40 349.20V373.70M700.40 360.25A9.50 9.50 0 0 1 719.40 360.25V373.70M724.9 350.75H740.4L726.8 372.25H743.1M748.70 349.20V362.90A9.35 9.35 0 0 0 767.40 362.90M767.40 349.20V373.70M778.7 373.7V347.5A6.8 6.8 0 0 1 785.5 340.75M773.4 350.75H785.5M791.50 349.20V363.15A9.10 9.10 0 0 0 809.70 363.15M809.70 349.20V373.70M841.2 361.5A11.5 10.75 0 1 0 818.2 361.5A11.5 10.75 0 1 0 841.2 361.5M841.2 349.2V370A11.6 11.3 0 0 1 818.7 373.9M849.76 360.80H872.16A11.2 10.75 0 1 0 870.94 366.38M881.30 349.20V373.70M881.30 360.10A9.35 9.35 0 0 1 900.00 360.10V373.70" fill="none" stroke-width="3.3" stroke-linejoin="miter"/><g stroke="none"><circle cx="690.80" cy="341.20" r="2.6"/><circle cx="795.90" cy="342.80" r="2.7"/><circle cx="805.00" cy="342.80" r="2.7"/></g></g></defs><g stroke="#262626" fill="#262626"><use href="#hinz"/><path d="M560.6 341.50H579.1M569.85 341.50V373.70M584.60 349.20V373.70M597.40 339.10V373.70M591.2 350.6H604M608.80 360.80H631.20A11.2 10.75 0 1 0 629.98 366.38M640.00 339.10V373.70" fill="none" stroke-width="3.3"/><g stroke="none"><circle cx="584.60" cy="341.20" r="2.6"/></g></g><g stroke="#404040" fill="#404040" transform="translate(316.35 319.15) scale(0.5)"><use href="#hinz"/><g fill="none" stroke-width="3.3"><path d="M556.30 341.50H575.10M565.30 341.50V373.70M577.90 360.80H600.30A11.2 10.75 0 1 0 599.08 366.38M637.70 339.10V373.70M630.90 350.6H643.70"/><g clip-path="url(#xclip)"><path d="M605.10 346.20L629.10 376.70M626.50 346.20L602.50 376.70"/></g></g></g></svg>

</div>
</body>
</html>
